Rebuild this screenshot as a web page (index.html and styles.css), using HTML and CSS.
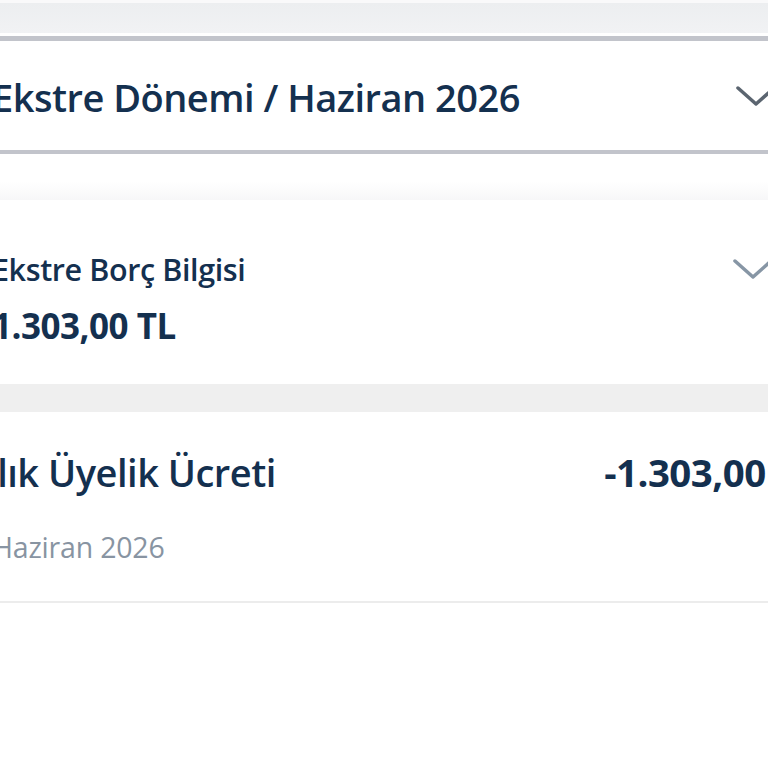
FILE: index.html
```html
<!DOCTYPE html>
<html lang="tr">
<head>
  <meta charset="UTF-8" />
  <meta name="viewport" content="width=device-width, initial-scale=1.0" />
  <title>Ekstre</title>
  <link rel="stylesheet" href="styles.css">
</head>
<body>
<main class="screen">
  <div class="topbar"></div>

  <div class="period">
    <span class="period-title">Ekstre Dönemi / Haziran 2026</span>
    <svg class="chevron dark" width="42" height="22" viewBox="0 0 42 22">
      <path d="M3 3 L21 19 L39 3" />
    </svg>
  </div>

  <div class="spacer"></div>

  <section class="debt">
    <div class="debt-info">
      <span class="debt-label">Ekstre Borç Bilgisi</span>
      <span class="debt-amount">1.303,00 TL</span>
    </div>
    <svg class="chevron light" width="42" height="22" viewBox="0 0 42 22">
      <path d="M3 3 L21 19 L39 3" />
    </svg>
  </section>

  <div class="band"></div>

  <section class="txn">
    <div class="txn-info">
      <span class="txn-title">Yıllık Üyelik Ücreti</span>
      <span class="txn-date">Haziran 2026</span>
    </div>
    <span class="txn-amount">-1.303,00 TL</span>
  </section>
</main>
</body>
</html>
```

FILE: styles.css
```css
body {
  margin: 0;
  background: #fff;
  font-family: 'Open Sans', 'Noto Sans', sans-serif;
  color: #14304f;
  overflow: hidden;
}

.screen {
  width: 830px;
  margin-left: -8px;
}

.topbar {
  height: 33px;
  border-top: 3px solid #f9f9fa;
  background: linear-gradient(#eceef0, #f1f2f4);
  box-sizing: border-box;
}

.period {
  display: flex;
  align-items: center;
  justify-content: space-between;
  height: 109px;
  margin-top: 3px;
  padding-right: 45px;
  border-top: 5px solid #c2c4cb;
  border-bottom: 4px solid #c2c4cb;
}

.period-title {
  font-size: 38px;
  font-weight: 600;
  letter-spacing: -0.5px;
  padding-top: 2px;
}

.chevron path {
  fill: none;
  stroke-width: 3.5;
  stroke-linecap: round;
  stroke-linejoin: round;
}

.chevron.dark path {
  stroke: #5b6570;
}

.chevron.light path {
  stroke: #8796a5;
}

.spacer {
  height: 46px;
  background: linear-gradient(#fff 60%, #f7f7f8);
}

.debt {
  display: flex;
  justify-content: space-between;
  align-items: flex-start;
  height: 184px;
  padding: 48px 48px 0 0;
  box-sizing: border-box;
}

.debt-info {
  display: flex;
  flex-direction: column;
  gap: 12px;
}

.debt-label {
  font-size: 30.5px;
  font-weight: 600;
  letter-spacing: -0.4px;
}

.debt-amount {
  font-size: 35px;
  font-weight: 700;
  letter-spacing: -0.5px;
}

.debt .chevron {
  margin-top: 10px;
}

.band {
  height: 28px;
  background: #efefef;
}

.txn {
  display: flex;
  justify-content: space-between;
  align-items: flex-start;
  height: 191px;
  padding-top: 34px;
  padding-right: 4px;
  box-sizing: border-box;
  border-bottom: 2px solid #ececec;
}

.txn-info {
  display: flex;
  flex-direction: column;
  gap: 30px;
}

.txn-title {
  font-size: 38px;
  font-weight: 600;
  letter-spacing: -0.5px;
  margin-left: -37px;
}

.txn-date {
  font-size: 28.5px;
  color: #8894a2;
  letter-spacing: -0.2px;
}

.txn-amount {
  font-size: 38.4px;
  font-weight: 700;
  letter-spacing: -0.5px;
}
```
